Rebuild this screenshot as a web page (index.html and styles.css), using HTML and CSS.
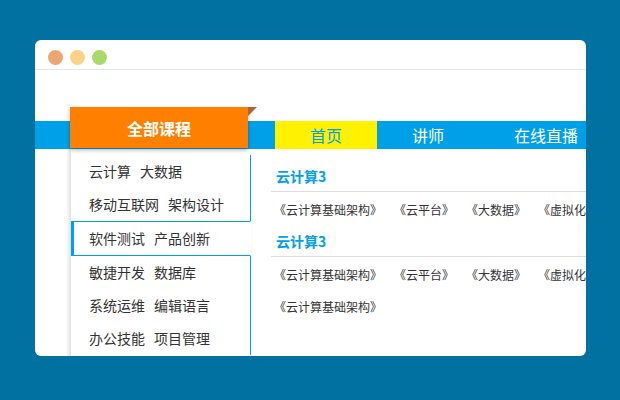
FILE: index.html
```html
<!DOCTYPE html>
<html lang="zh-CN">
  <head>
    <meta charset="UTF-8" />
    <meta name="viewport" content="width=device-width, initial-scale=1.0" />
    <title>全部课程</title>
    <link rel="stylesheet" href="styles.css">
  </head>
  <body>
    <div class="window">
      <div class="titlebar">
        <span class="dot red"></span>
        <span class="dot yellow"></span>
        <span class="dot green"></span>
      </div>

      <div class="nav">
        <div class="all-courses">全部课程</div>
        <a class="nav-item active" href="#">首页</a>
        <a class="nav-item" href="#">讲师</a>
        <a class="nav-item" href="#">在线直播</a>
      </div>

      <div class="menu">
        <ul class="side">
          <li><span>云计算</span><span>大数据</span></li>
          <li><span>移动互联网</span><span>架构设计</span></li>
          <li class="current"><span>软件测试</span><span>产品创新</span></li>
          <li><span>敏捷开发</span><span>数据库</span></li>
          <li><span>系统运维</span><span>编辑语言</span></li>
          <li><span>办公技能</span><span>项目管理</span></li>
        </ul>

        <div class="panel">
          <h3>云计算3</h3>
          <div class="books">
            <a href="#">《云计算基础架构》</a>
            <a href="#">《云平台》</a>
            <a href="#">《大数据》</a>
            <a href="#">《虚拟化技术》</a>
          </div>
          <h3>云计算3</h3>
          <div class="books">
            <a href="#">《云计算基础架构》</a>
            <a href="#">《云平台》</a>
            <a href="#">《大数据》</a>
            <a href="#">《虚拟化技术》</a>
            <a href="#">《云计算基础架构》</a>
          </div>
        </div>
      </div>
    </div>
  </body>
</html>
```

FILE: styles.css
```css
:root {
  --blue: #00a0e9;
  --orange: #ff7f00;
  --text: #333333;
}

body {
  margin: 0;
  background-color: #0071a1;
  font-family: "Noto Sans CJK SC", sans-serif;
  height: 400px;
  overflow: hidden;
}

a {
  text-decoration: none;
}

ul {
  margin: 0;
  padding: 0;
  list-style: none;
}

.window {
  margin: 40px 0 0 35px;
  width: 551px;
  height: 316px;
  background: #fff;
  border-radius: 6px;
  overflow: hidden;
  display: flex;
  flex-direction: column;
}

.titlebar {
  height: 30px;
  border-bottom: 1px solid #e6e6e6;
  display: flex;
  gap: 7px;
  padding: 10px 0 0 13px;
  box-sizing: border-box;
  flex-shrink: 0;
}

.dot {
  width: 15px;
  height: 15px;
  border-radius: 50%;
}

.red { background: #eba672; }
.yellow { background: #fbd387; }
.green { background: #a9d86b; }

.nav {
  margin-top: 51px;
  height: 28px;
  background: var(--blue);
  display: flex;
  align-items: flex-start;
  padding-left: 35px;
  flex-shrink: 0;
  position: relative;
  z-index: 2;
}

.nav > * {
  flex-shrink: 0;
  white-space: nowrap;
}

.all-courses {
  position: relative;
  width: 178px;
  height: 41px;
  margin-top: -14px;
  margin-right: 27px;
  background: var(--orange);
  color: #fff;
  font-size: 16px;
  font-weight: bold;
  line-height: 43px;
  text-align: center;
  box-shadow: 0 2px 4px rgba(0, 0, 0, 0.3);
}

/* folded corner */
.all-courses::after {
  content: "";
  position: absolute;
  top: 0;
  right: -9px;
  border-style: solid;
  border-width: 0 0 9px 9px;
  border-color: transparent transparent transparent #a9653b;
}

.nav-item {
  padding: 0 35px;
  height: 28px;
  line-height: 28px;
  font-size: 16px;
  color: #fff;
}

.nav-item.active {
  background: #fff100;
  color: var(--blue);
}

.menu {
  display: flex;
  align-items: flex-start;
  margin-left: 36px;
}

.side {
  width: 180px;
  flex-shrink: 0;
  padding-top: 6px;
  padding-bottom: 20px;
  background: #fff;
  box-shadow: -2px 0 4px rgba(0, 0, 0, 0.15);
  position: relative;
  z-index: 1;
}

.side li {
  height: 33px;
  line-height: 33px;
  padding-left: 18px;
  font-size: 14px;
  color: var(--text);
  border-right: 1px solid var(--blue);
  white-space: nowrap;
}

.side li span {
  margin-right: 9px;
}

.side li.current {
  border: 1px solid var(--blue);
  border-left-width: 3px;
  border-right-color: #fff;
  padding-left: 15px;
  line-height: 32px;
}

.panel {
  width: 388px;
  flex-shrink: 0;
  padding: 12px 0 0 20px;
}

.panel h3 {
  margin: 0;
  padding-left: 5px;
  height: 30px;
  line-height: 30px;
  font-size: 14px;
  color: var(--blue);
  border-bottom: 1px solid #dddddd;
}

.books {
  display: flex;
  flex-wrap: wrap;
  column-gap: 12px;
  padding: 2px 0 0 3px;
}

.books a {
  font-size: 12px;
  line-height: 32px;
  color: var(--text);
  white-space: nowrap;
}
```
